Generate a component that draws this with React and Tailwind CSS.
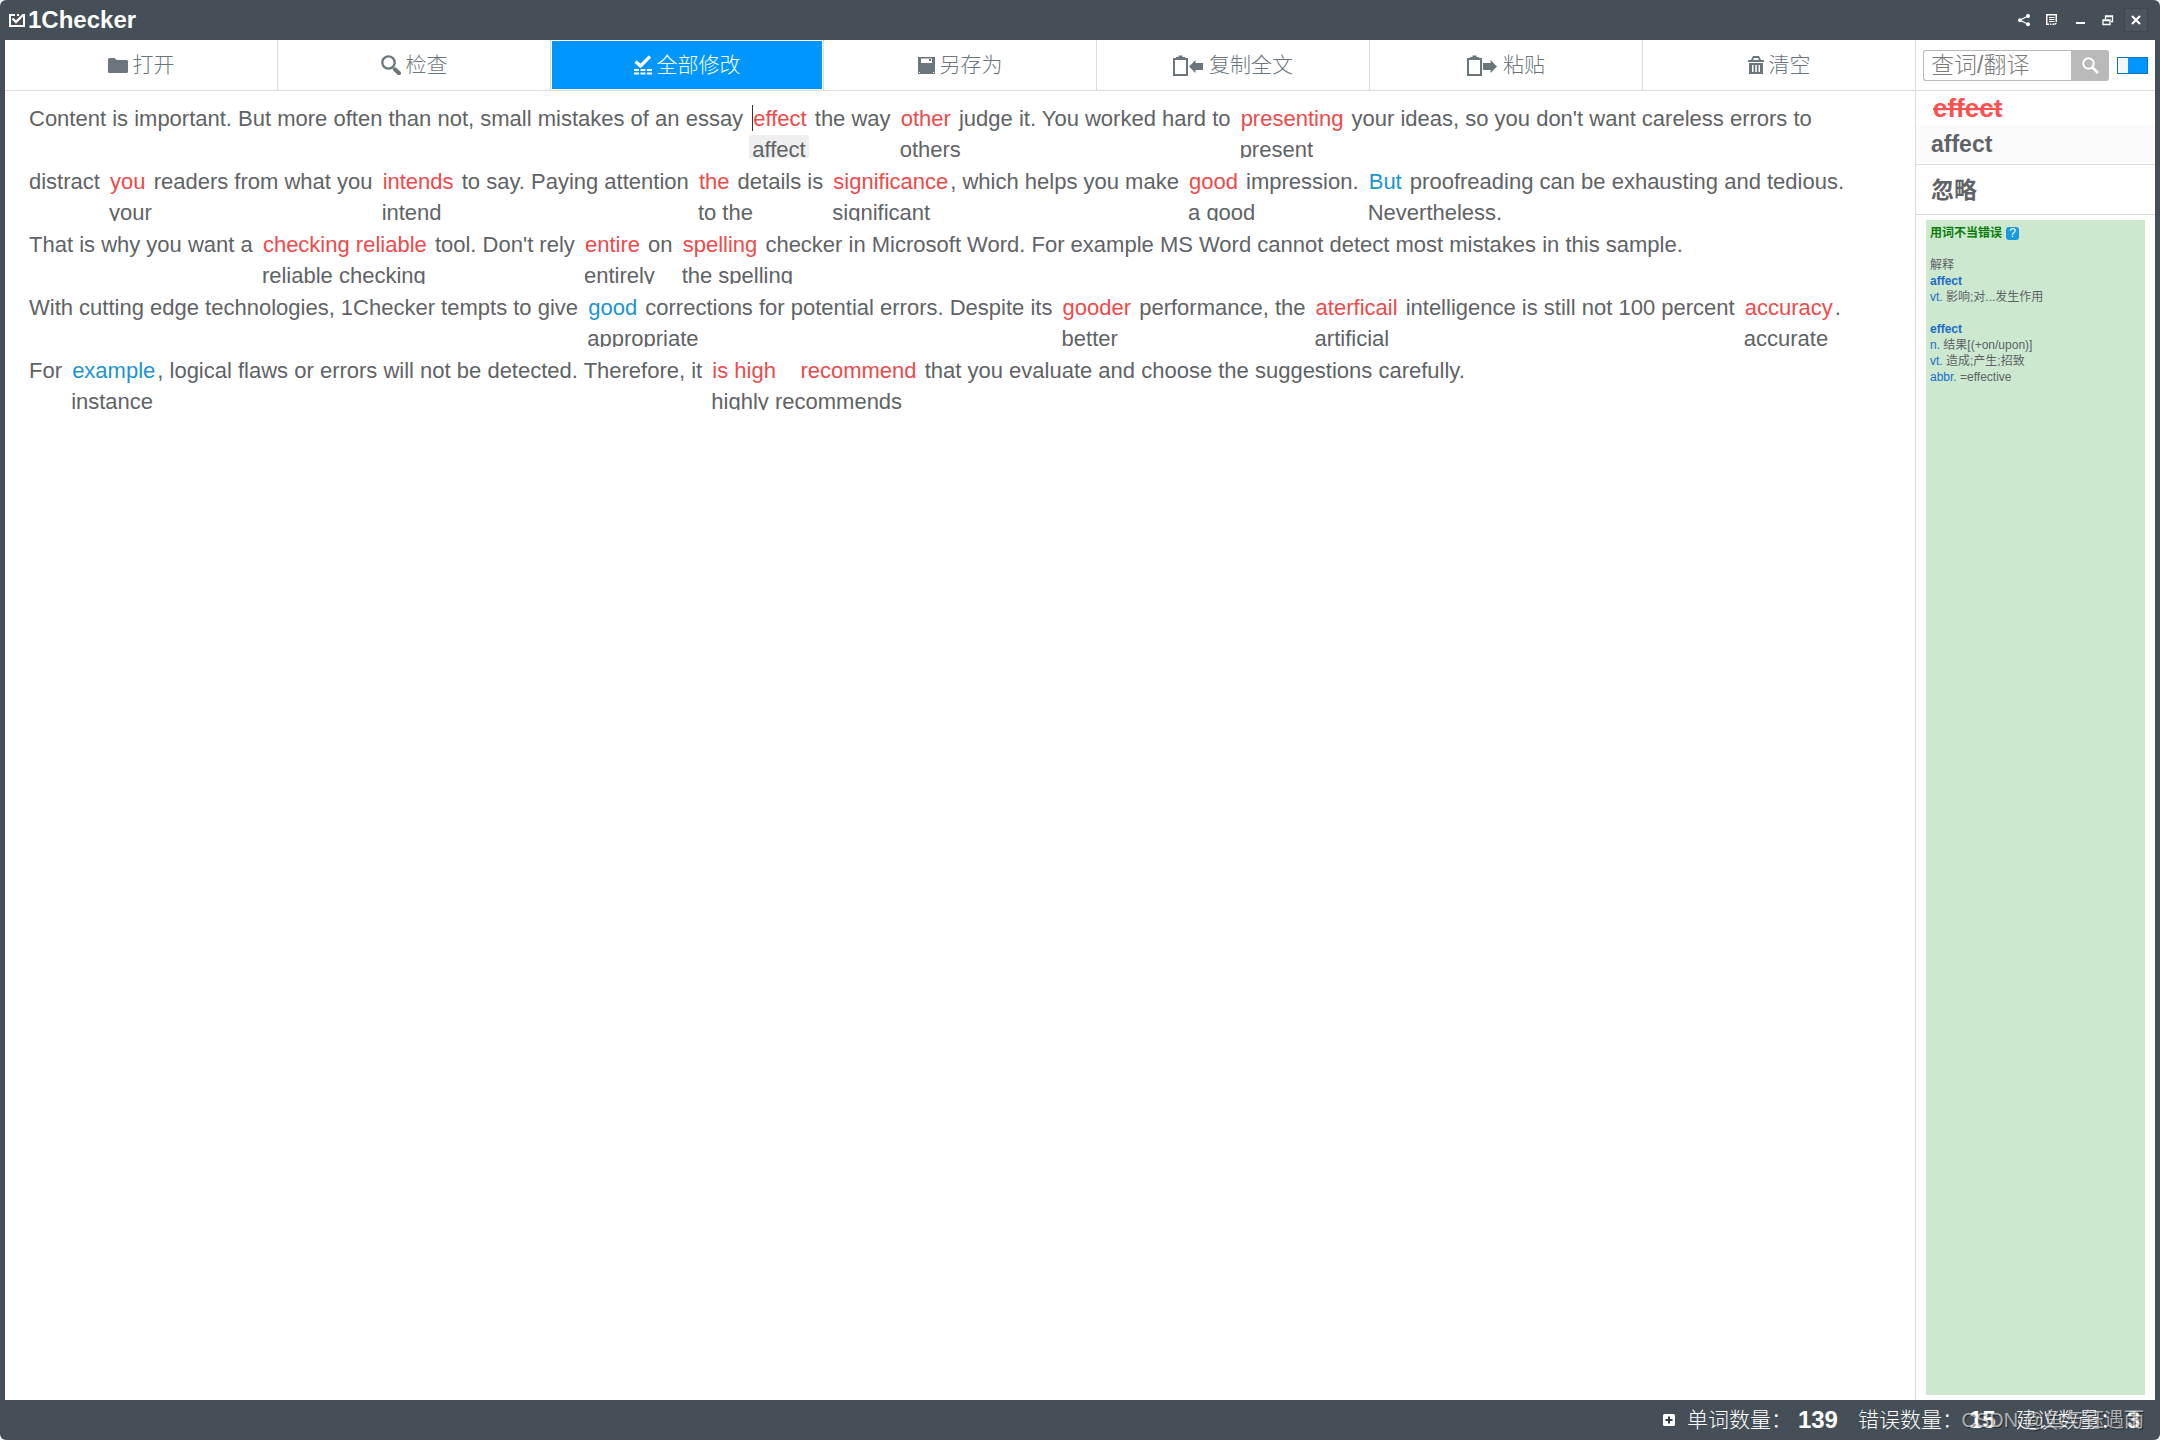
import { useState } from 'react';

const FolderIcon = () => (
  <svg className="w-5 h-[15px]" viewBox="0 0 20 15" fill="currentColor">
    <path d="M0 1.500Q0 0 1.500 0H6.500L8.500 2H18.500Q20 2 20 3.500V13.500Q20 15 18.500 15H1.500Q0 15 0 13.500Z" />
  </svg>
);

const SearchIcon = () => (
  <svg className="size-5" viewBox="0 0 20 20" fill="none" stroke="currentColor">
    <circle cx="7.500" cy="7.500" r="6.200" strokeWidth="2.300" />
    <path d="M13.800 14.300L18 18.200" strokeWidth="4" strokeLinecap="round" />
  </svg>
);

const CheckAllIcon = () => (
  <svg className="w-[18px] h-5" viewBox="0 0 18 20">
    <path d="M1.500 6.500L6.500 11L16 1.500" fill="none" stroke="currentColor" strokeWidth="3.200" />
    <path d="M0 14h5v2H0zM6.500 14h5v2h-5zM13 14h5v2h-5zM0 17.500h5v2H0zM6.500 17.500h5v2h-5zM13 17.500h5v2h-5z" fill="currentColor" />
  </svg>
);

const SaveIcon = () => (
  <svg className="size-[17px]" viewBox="0 0 17 17">
    <path d="M0 0H17V17H0Z" fill="currentColor" />
    <path d="M3 1.500H14V6H3ZM1 15h1v1H1zM15 15h1v1h-1z" fill="#fff" />
    <path d="M11 2h2v2h-2z" fill="currentColor" />
  </svg>
);

const Clipboard = () => (
  <>
    <path d="M1 4H14V20H1Z" fill="none" stroke="currentColor" strokeWidth="2" />
    <path d="M3 5V2H5.500V0.500H9.500V2H12V5Z" fill="currentColor" />
  </>
);

const CopyIcon = () => (
  <svg className="w-[31px] h-[21px]" viewBox="0 0 31 21">
    <Clipboard />
    <path d="M16 11.500L22.500 5V8H30V15H22.500V18Z" fill="currentColor" />
  </svg>
);

const PasteIcon = () => (
  <svg className="w-[31px] h-[21px]" viewBox="0 0 31 21">
    <Clipboard />
    <path d="M30 11.500L23.500 5V8H16V15H23.500V18Z" fill="currentColor" />
  </svg>
);

const TrashIcon = () => (
  <svg className="w-4 h-[18px]" viewBox="0 0 16 18">
    <path d="M0 6V4H3L5 0H11L13 4H16V6ZM5 4H11L10 2H6Z" fill="currentColor" />
    <path d="M1 7H15V18H1ZM4 9v7h1.500V9zM7.300 9v7h1.500V9zM10.500 9v7H12V9z" fill="currentColor" fillRule="evenodd" />
  </svg>
);

const LogoIcon = () => (
  <svg className="w-4 h-[13px]" viewBox="0 0 16 13" fill="none" stroke="currentColor">
    <path d="M6 1H1V12H15V1H13M8 1h2" strokeWidth="2" />
    <path d="M3.500 4.500L7 8L13.500 1.500" strokeWidth="2.400" />
  </svg>
);

const tools = [
  { label: '打开', icon: FolderIcon },
  { label: '检查', icon: SearchIcon },
  { label: '全部修改', icon: CheckAllIcon, active: true },
  { label: '另存为', icon: SaveIcon },
  { label: '复制全文', icon: CopyIcon },
  { label: '粘贴', icon: PasteIcon },
  { label: '清空', icon: TrashIcon },
];

const windowButtons = [
  {
    label: '分享',
    icon: (
      <>
        <path d="M10 2L2 6.200L10 10.200" fill="none" stroke="currentColor" strokeWidth="1.200" />
        <circle cx="10" cy="2" r="2" fill="currentColor" />
        <circle cx="2" cy="6.200" r="2" fill="currentColor" />
        <circle cx="10" cy="10.200" r="2" fill="currentColor" />
      </>
    ),
  },
  {
    label: '反馈',
    icon: (
      <>
        <path d="M0 0H11V8H9.500V1.500H1.500V9.500H3V11H0Z" fill="currentColor" />
        <path d="M3 3h5.500v1H3zM3 5h5.500v1H3zM3 7h5.500v1H3zM4 9.500h1.500V11H4zM6.500 9.500H8V11H6.500zM8.500 9H11L8.500 11.500z" fill="currentColor" />
      </>
    ),
  },
  { label: '最小化', icon: <path d="M2 8h9v2H2z" fill="currentColor" /> },
  {
    label: '还原',
    icon: (
      <path d="M1 6H8V10.500H1ZM1 6.500H8M3.500 5V2H10.500V7.500H9M3.500 2.500H11" fill="none" stroke="currentColor" strokeWidth="1.300" />
    ),
  },
  { label: '关闭', boxed: true, icon: <path d="M2 2L10 10M10 2L2 10" stroke="currentColor" strokeWidth="2.200" /> },
];

// plain strings are untouched text, objects are flagged words
const lines = [
  [
    'Content is important. But more often than not, small mistakes of an essay ',
    { word: 'effect', fix: 'affect', current: true },
    ' the way ',
    { word: 'other', fix: 'others' },
    ' judge it. You worked hard to ',
    { word: 'presenting', fix: 'present' },
    " your ideas, so you don't want careless errors to",
  ],
  [
    'distract ',
    { word: 'you', fix: 'your' },
    ' readers from what you ',
    { word: 'intends', fix: 'intend' },
    ' to say. Paying attention ',
    { word: 'the', fix: 'to the' },
    ' details is ',
    { word: 'significance', fix: 'significant' },
    ', which helps you make ',
    { word: 'good', fix: 'a good' },
    ' impression. ',
    { word: 'But', fix: 'Nevertheless.', hint: true },
    ' proofreading can be exhausting and tedious.',
  ],
  [
    'That is why you want a ',
    { word: 'checking reliable', fix: 'reliable checking' },
    " tool. Don't rely ",
    { word: 'entire', fix: 'entirely' },
    ' on ',
    { word: 'spelling', fix: 'the spelling' },
    ' checker in Microsoft Word. For example MS Word cannot detect most mistakes in this sample.',
  ],
  [
    'With cutting edge technologies, 1Checker tempts to give ',
    { word: 'good', fix: 'appropriate', hint: true },
    ' corrections for potential errors. Despite its ',
    { word: 'gooder', fix: 'better' },
    ' performance, the ',
    { word: 'aterficail', fix: 'artificial' },
    ' intelligence is still not 100 percent ',
    { word: 'accuracy', fix: 'accurate' },
    '.',
  ],
  [
    'For ',
    { word: 'example', fix: 'instance', hint: true },
    ', logical flaws or errors will not be detected. Therefore, it ',
    { word: 'is high\u00a0\u00a0\u00a0 recommend', fix: 'highly recommends' },
    ' that you evaluate and choose the suggestions carefully.',
  ],
];

const Flagged = ({ item }) => (
  <span className={`relative inline-block pl-1 pr-0.5 ${item.hint ? 'text-[#1b95d0]' : 'text-[#ee4a4a]'}`}>
    {item.current && <span className="absolute left-[3px] top-px h-[26px] w-px bg-[#333]" />}
    {item.word}
    <button
      type="button"
      className={`absolute left-0 top-[31px] h-[23px] px-[3px] leading-[30px] overflow-hidden rounded-t-[3px] text-[#606366] ${item.current ? 'bg-[#efefef]' : ''}`}
    >
      {item.fix}
    </button>
  </span>
);

const Stat = ({ label, value }) => (
  <span className="flex items-center">
    <span className="w-[111px]">{label}：</span>
    <span className="text-2xl leading-6 font-bold">{value}</span>
  </span>
);

const App = () => {
  const [query, setQuery] = useState('');

  return (
    <div className="relative h-screen flex flex-col overflow-hidden rounded-md bg-[#454f58] text-[#606366] font-['Liberation_Sans','Noto_Sans_CJK_SC',sans-serif]">
      <header className="h-10 shrink-0 flex items-center justify-between pl-[9px] pr-3 text-white">
        <div className="flex items-center gap-[3px]">
          <LogoIcon />
          <h1 className="text-2xl leading-6 font-bold">1Checker</h1>
        </div>
        <div className="flex gap-1">
          {windowButtons.map((b) => (
            <button
              key={b.label}
              type="button"
              aria-label={b.label}
              className={`size-6 flex items-center justify-center border ${b.boxed ? 'bg-[#4b555e] border-[#3d464e]' : 'border-transparent'}`}
            >
              <svg className="size-3" viewBox="0 0 12 12" overflow="visible">{b.icon}</svg>
            </button>
          ))}
        </div>
      </header>

      <div className="flex-1 min-h-0 mx-[5px] flex bg-white">
        <main className="flex-1 min-w-0">
          <nav className="h-[51px] flex border-b border-[#dcdcdc]">
            {tools.map(({ label, icon: Icon, active }) => (
              <div key={label} className="flex-1 p-px border-r border-[#dcdcdc] last:border-r-0">
                <button
                  type="button"
                  className={`size-full flex items-center justify-center gap-[5px] text-[21px] font-light ${active ? 'bg-[#0096ff] text-white' : 'text-[#6b757c]'}`}
                >
                  <Icon />
                  {label}
                </button>
              </div>
            ))}
          </nav>
          <article className="pt-[13px] px-6 text-[22px] leading-[30px] whitespace-nowrap">
            {lines.map((line, i) => (
              <p key={i} className="h-[63px]">
                {line.map((part, j) => (typeof part === 'string' ? part : <Flagged key={j} item={part} />))}
              </p>
            ))}
          </article>
        </main>

        <aside className="w-60 shrink-0 flex flex-col border-l border-[#dcdcdc]">
          <form className="h-[51px] shrink-0 flex items-center gap-2 px-[7px] border-b border-[#dcdcdc]" onSubmit={(e) => e.preventDefault()}>
            <div className="h-[31px] flex-1 min-w-0 flex">
              <input
                aria-label="查词/翻译"
                placeholder="查词/翻译"
                value={query}
                onChange={(e) => setQuery(e.target.value)}
                className="flex-1 min-w-0 px-[7px] text-[23px] leading-7 font-light border border-r-0 border-[#b9b9b9] rounded-l-[3px] placeholder:text-[#7b7b7b]"
              />
              <button type="submit" aria-label="搜索" className="w-[38px] shrink-0 flex items-center justify-center rounded-r-[3px] bg-[#b9b9b9] text-white">
                <svg className="size-[17px]" viewBox="0 0 17 17" fill="none" stroke="currentColor">
                  <circle cx="6.500" cy="6.500" r="5.200" strokeWidth="2" />
                  <path d="M10.500 10.500L16 16" strokeWidth="2.600" />
                </svg>
              </button>
            </div>
            <button type="button" aria-label="切换" className="w-[31px] h-[17px] shrink-0 border border-[#0a74c0] bg-[#0096ff]">
              <span className="block h-full w-2.5 bg-[#f4f8fb]" />
            </button>
          </form>

          <div className="shrink-0 border-b border-[#dcdcdc] font-bold">
            <del className="block h-[34px] pl-[17px] text-[26px] leading-[34px] text-[#fa5050]">effect</del>
            <button type="button" className="block w-full h-[37px] mb-0.5 pt-0.5 pl-[15px] text-left text-[23px] bg-[#fbfbfb]">affect</button>
          </div>
          <button type="button" className="shrink-0 h-[50px] pt-0.5 pl-[15px] text-left text-[23px] font-bold border-b border-[#dcdcdc]">忽略</button>

          <section className="flex-1 mt-[5px] mx-2.5 mb-[5px] pt-[5px] px-1 bg-[#cce8cf] text-xs leading-4">
            <h2 className="flex items-center gap-1 font-bold text-[#0a7d0a]">
              用词不当错误
              <button type="button" className="size-[13px] flex items-center justify-center rounded-[3px] bg-[#1b9ade] text-white text-xs leading-3 font-normal">?</button>
            </h2>
            <h3 className="mt-4">解释</h3>
            <p className="font-bold text-[#1b6dc8]">affect</p>
            <p><span className="text-[#1b6dc8]">vt.</span> 影响;对...发生作用</p>
            <p className="mt-4 font-bold text-[#1b6dc8]">effect</p>
            <p><span className="text-[#1b6dc8]">n.</span> 结果[(+on/upon)]</p>
            <p><span className="text-[#1b6dc8]">vt.</span> 造成;产生;招致</p>
            <p><span className="text-[#1b6dc8]">abbr.</span> =effective</p>
          </section>
        </aside>
      </div>

      <footer className="h-10 shrink-0 flex items-center justify-end gap-5 pr-5 text-white text-[21px] font-light">
        <div className="flex items-center gap-3">
          <svg className="size-3" viewBox="0 0 12 12">
            <rect width="12" height="12" rx="1.500" fill="#fff" />
            <path d="M6 2.500V9.500M2.500 6H9.500" stroke="#333d45" strokeWidth="2" />
          </svg>
          <Stat label="单词数量" value="139" />
        </div>
        <Stat label="错误数量" value="15" />
        <Stat label="建议数量" value="3" />
      </footer>
      <span className="absolute right-4 bottom-1.5 text-[20px] leading-7 text-white/60 [text-shadow:1px_1px_1px_rgba(0,0,0,0.5)]">CSDN @鱼与钰遇雨</span>
    </div>
  );
};

export default App;
